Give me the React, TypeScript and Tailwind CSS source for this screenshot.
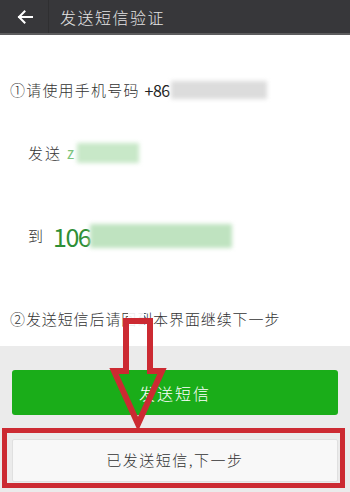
import React from "react";

const font = { fontFamily: '"Noto Sans CJK SC", "Noto Sans", sans-serif' };

function BackArrow() {
  return (
    <svg width="18" height="18" viewBox="0 0 18 18" fill="none" stroke="#ffffff" strokeWidth="2" strokeLinecap="square">
      <path d="M16 9H3" />
      <path d="M8.5 3.5L3 9l5.5 5.5" />
    </svg>
  );
}

export default function App() {
  return (
    <div
      className="relative w-[350px] h-[492px] overflow-hidden bg-white text-[#333] font-['Noto_Sans_CJK_SC',_'Noto_Sans',_sans-serif]"
      style={font}
    >
      {/* Header */}
      <div className="h-[35px] bg-[#37373a] border-b-2 border-[#5c5c5e] flex items-center">
        <div className="w-[48px] h-full flex items-center justify-center pl-[2px]">
          <BackArrow />
        </div>
        <div className="w-px h-full bg-[#2f2f31]" />
        <div className="pl-[11px] text-[16px] tracking-[1.5px] text-[#e4e4e4] font-light">发送短信验证</div>
      </div>

      {/* Content */}
      <div className="h-[311px] px-[10px]">
        <div className="pt-[44px] flex items-center h-[66px] text-[15px] tracking-[1.2px] font-light">
          <span>①请使用手机号码</span>
          <span className="ml-[5px] text-[16px] text-[#222] tracking-[-0.5px] font-normal">+86</span>
          <span className="ml-[1px] w-[96px] h-[18px] bg-[#dcdcdc] blur-[2px]" />
        </div>

        <div className="mt-[42px] pl-[18px] flex items-center h-[20px] text-[15px] tracking-[2px] font-light">
          <span>发送</span>
          <span className="ml-[5px] text-[#7cc47c] font-normal">z</span>
          <span className="ml-[1px] w-[62px] h-[20px] bg-[#c8e8c8] blur-[2px]" />
        </div>

        <div className="mt-[58px] pl-[18px] flex items-center h-[30px]">
          <span className="text-[15px] font-light">到</span>
          <span className="ml-[10px] text-[25px] leading-none text-[#2e8f36] tracking-[-1.5px]">106</span>
          <span className="w-[142px] h-[24px] bg-[#bfe3c0] blur-[2px]" />
        </div>

        <div className="mt-[58px] flex items-center h-[20px] text-[15px] tracking-[0.9px] font-light">
          ②发送短信后请回到本界面继续下一步
        </div>
      </div>

      {/* Bottom actions */}
      <div className="h-[146px] bg-[#ebebeb] pt-[24px]">
        <div className="mx-[12px] h-[45px] rounded-[3px] bg-[#1aad19] flex items-center justify-center text-white text-[16px] tracking-[2px] font-light">
          发送短信
        </div>
        <div className="mt-[13px] ml-[2px] w-[343px] h-[60px] border-[5px] border-[#cc2a32] pt-[6px] pl-[5px] pr-[2px] pb-[1px]">
          <div className="h-full border border-[#e0e0e0] rounded-[2px] bg-[#f8f8f8] flex items-center justify-center text-[15px] tracking-[1.5px] text-[#333] font-light">
            已发送短信,下一步
          </div>
        </div>
      </div>

      {/* Annotation arrow */}
      <svg className="absolute left-0 top-0 pointer-events-none" width="350" height="492" viewBox="0 0 350 492">
        <rect x="128" y="313" width="16" height="20" fill="#ffffff" fillOpacity="0.9" />
        <polygon
          points="126,321 150,321 150,371 162,371 138,424 114,371 126,371"
          fill="none"
          stroke="#cc2a32"
          strokeWidth="6"
          strokeLinejoin="miter"
        />
      </svg>
    </div>
  );
}
